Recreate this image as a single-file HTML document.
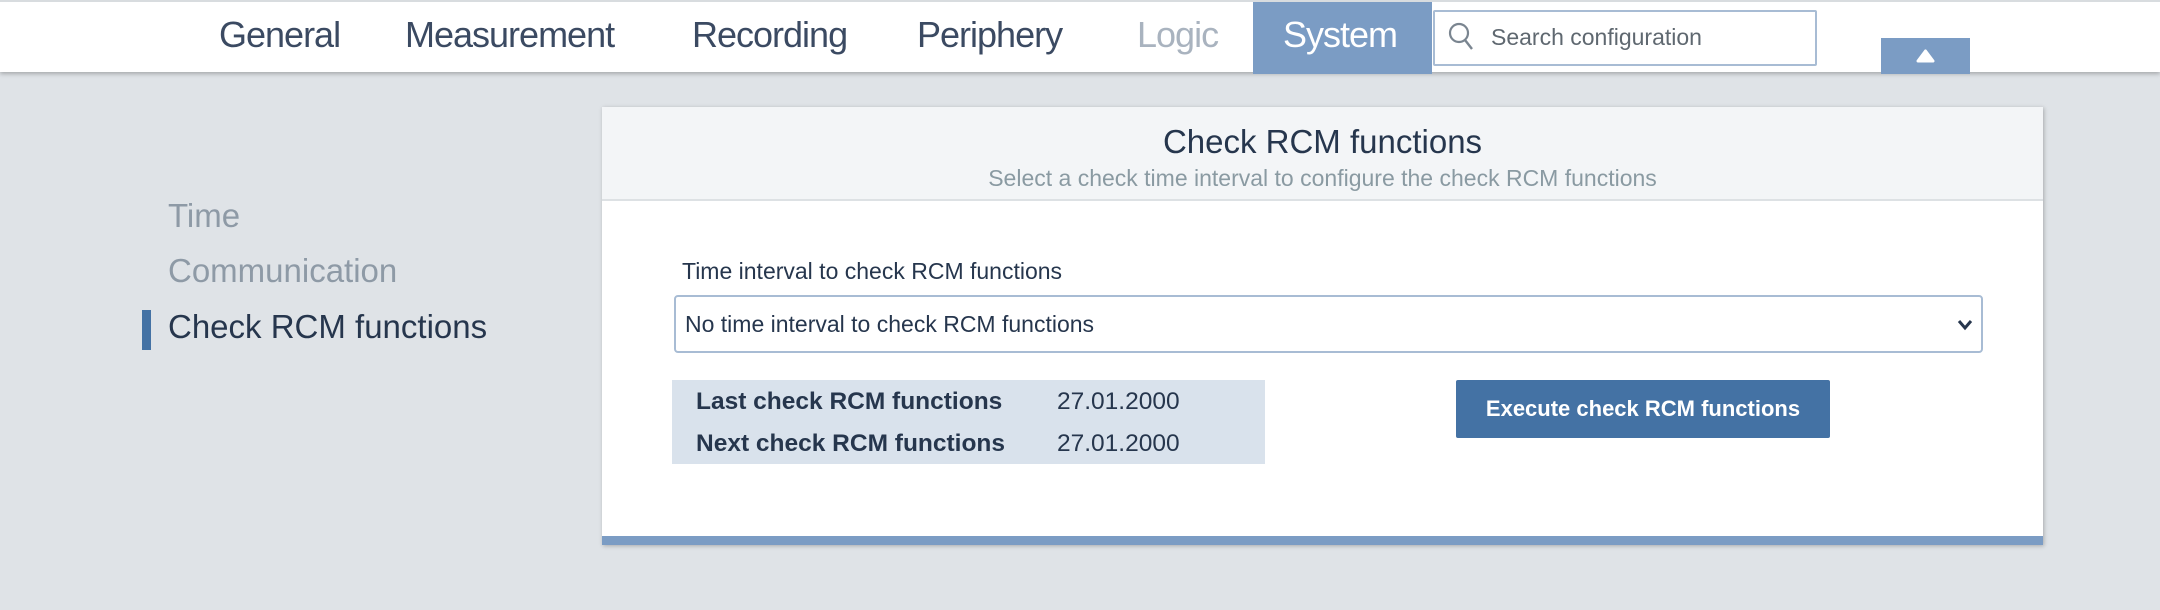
<!DOCTYPE html>
<html><head><meta charset="utf-8"><style>
*{margin:0;padding:0;box-sizing:border-box}
body{width:2160px;height:610px;background:#dfe3e7;font-family:"Liberation Sans",sans-serif;position:relative;overflow:hidden;color:#26364d}
.hdr{position:absolute;left:0;top:0;width:2160px;height:72px;background:#fff;box-shadow:0 2px 4px rgba(0,0,0,.25);border-top:2px solid #d8dcdf}
.tab{position:absolute;top:12px;font-size:36px;font-weight:normal;color:#3b4a62;letter-spacing:-1px;transform-origin:left top}
.sys{position:absolute;left:1253px;top:0;width:179px;height:72px;background:#7b9cc4}
.search{position:absolute;left:1433px;top:8px;width:384px;height:56px;border:2px solid #a8bcd4;border-radius:2px;background:#fff}
.up{position:absolute;left:1881px;top:36px;width:89px;height:36px;background:#7b9cc4}
.nav{position:absolute;left:168px;font-size:33px;color:#8e9aa6}
.card{position:absolute;left:602px;top:107px;width:1441px;height:438px;background:#fff;box-shadow:1px 1px 4px rgba(0,0,0,.25)}
.ch{position:absolute;left:0;top:0;width:100%;height:94px;background:#f3f5f7;border-bottom:2px solid #dde1e4}
</style></head><body>
<div class="hdr">
<span class="tab" style="left:219px">General</span>
<span class="tab" style="left:405px">Measurement</span>
<span class="tab" style="left:692px">Recording</span>
<span class="tab" style="left:917px">Periphery</span>
<span class="tab" style="left:1137px;color:#a9b3bf">Logic</span>
<div class="sys"></div>
<span class="tab" style="left:1283px;color:#fff">System</span>
<div class="search">
<svg width="30" height="34" style="position:absolute;left:12px;top:9px" viewBox="0 0 30 34"><circle cx="12" cy="12" r="9" fill="none" stroke="#7a8590" stroke-width="2.2"/><line x1="18" y1="19" x2="25" y2="28" stroke="#7a8590" stroke-width="2.4"/></svg>
<span style="position:absolute;left:56px;top:12px;font-size:23px;color:#5f6870">Search configuration</span>
</div>
<div class="up"><svg width="89" height="36"><path d="M37 23 L44.5 13 L52 23 Z" fill="#fff" stroke="#fff" stroke-width="3" stroke-linejoin="round"/></svg></div>
</div>

<div class="nav" style="top:197px">Time</div>
<div class="nav" style="top:252px">Communication</div>
<div style="position:absolute;left:142px;top:310px;width:9px;height:40px;background:#4472a4"></div>
<div class="nav" style="top:308px;color:#26364d">Check RCM functions</div>

<div class="card">
<div class="ch">
<div style="position:absolute;width:100%;top:16px;text-align:center;font-size:33px;color:#26364d">Check RCM functions</div>
<div style="position:absolute;width:100%;top:58px;text-align:center;font-size:23px;color:#8a9aa2">Select a check time interval to configure the check RCM functions</div>
</div>
<div style="position:absolute;left:80px;top:151px;font-size:23px;color:#26364d">Time interval to check RCM functions</div>
<div style="position:absolute;left:72px;top:188px;width:1309px;height:58px;border:2px solid #a8bcd4;border-radius:4px">
<span style="position:absolute;left:9px;top:14px;font-size:23px;color:#26364d">No time interval to check RCM functions</span>
<svg width="16" height="12" style="position:absolute;right:8px;top:22px"><path d="M2 2 L8 9 L14 2" fill="none" stroke="#26364d" stroke-width="3"/></svg>
</div>
<div style="position:absolute;left:70px;top:273px;width:593px;height:84px;background:#d9e2ec">
<span style="position:absolute;left:24px;top:8px;font-size:24.5px;font-weight:bold">Last check RCM functions</span>
<span style="position:absolute;left:385px;top:8px;font-size:24.5px">27.01.2000</span>
<span style="position:absolute;left:24px;top:50px;font-size:24.5px;font-weight:bold">Next check RCM functions</span>
<span style="position:absolute;left:385px;top:50px;font-size:24.5px">27.01.2000</span>
</div>
<div style="position:absolute;left:854px;top:273px;width:374px;height:58px;background:#4472a4;border-radius:2px;color:#fff;font-weight:bold;font-size:22px;text-align:center;line-height:58px">Execute check RCM functions</div>
<div style="position:absolute;left:0;bottom:0;width:100%;height:9px;background:#7b9cc4"></div>
</div>
</body></html>
